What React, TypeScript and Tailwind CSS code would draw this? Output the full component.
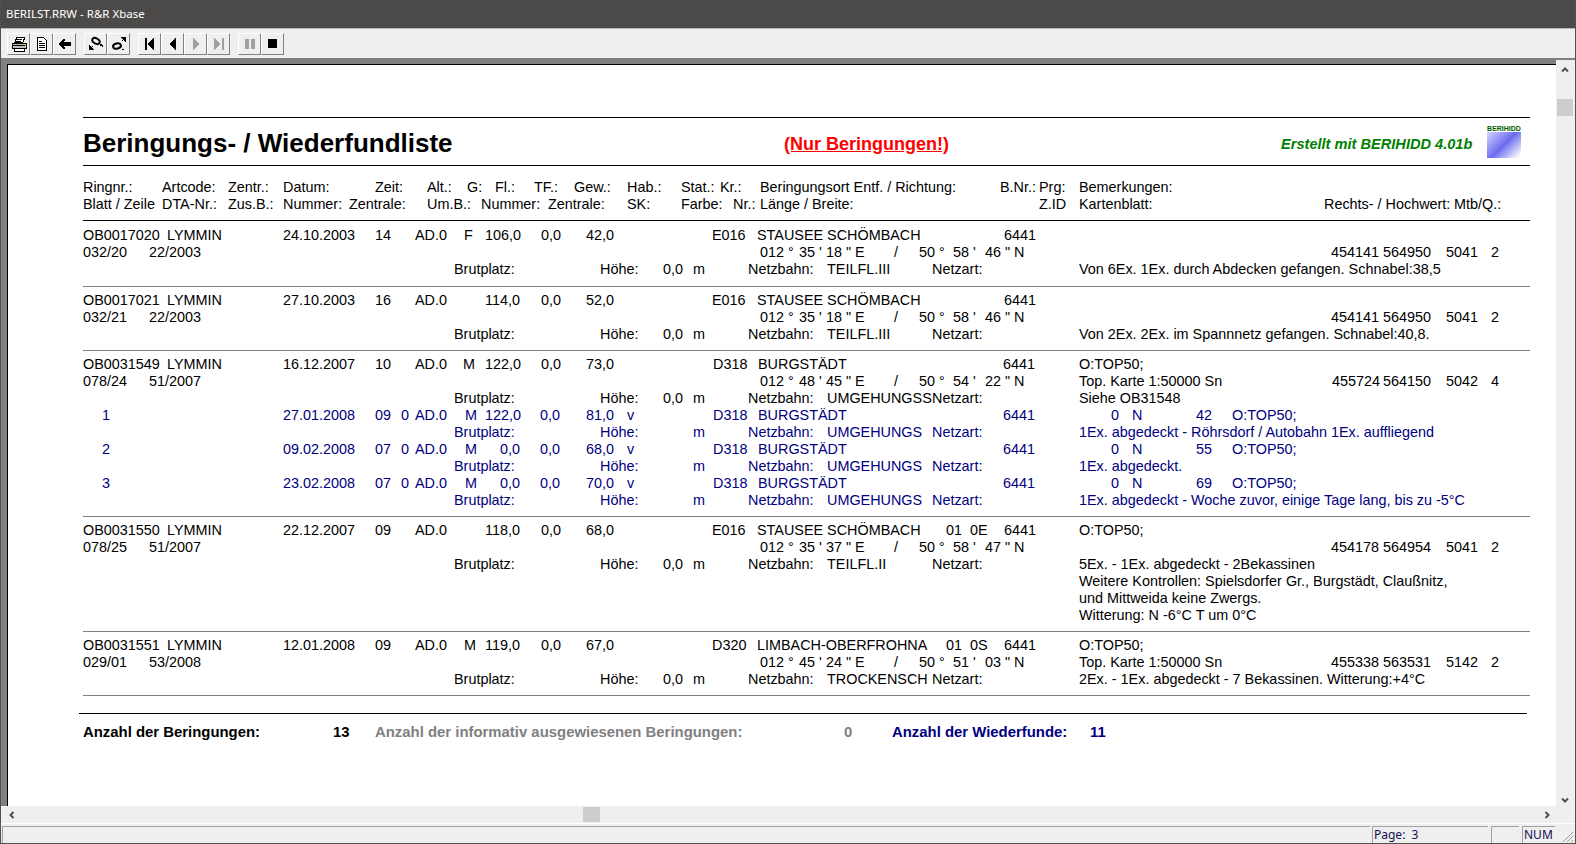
import type { ReactNode } from "react";

type Cell = [number, string];

const PAGE_X = 83;

// column positions are the content of this print preview: each line is a flex
// row whose cells run from one column start to the next
function Line({ cells }: { cells: Cell[] }) {
  return (
    <div className="flex h-[17px] items-center whitespace-pre">
      {cells.map(([x, text], i) => {
        const next = cells[i + 1] ? cells[i + 1][0] : null;
        return (
          <span
            key={i}
            className="shrink-0"
            style={{
              marginLeft: i === 0 ? x - PAGE_X : 0,
              width: next === null ? undefined : next - x,
            }}
          >
            {text}
          </span>
        );
      })}
    </div>
  );
}

function coords(a: string, b: string, c: string, d: string, e: string, f: string): Cell[] {
  return [
    [760, `${a} °`],
    [799, `${b} '`],
    [826, `${c} " E`],
    [894, "/"],
    [919, `${d} °`],
    [953, `${e} '`],
    [985, `${f} " N`],
  ];
}

function Row({ lines, className = "pt-[5px] pb-[7px]" }: { lines: ReactNode; className?: string }) {
  return <div className={`border-b border-[#808080] ${className}`}>{lines}</div>;
}

function SubRow({ n, date, time, w1, w2, v, no, c, text }: {
  n: string; date: string; time: string; w1: string; w2: string; v: string; no: string; c: string; text: string;
}) {
  return (
    <div className="text-[#000080]">
      <Line
        cells={[
          [102, n], [283, date], [375, time], [401, "0"], [415, "AD.0"], [465, "M"],
          [w1 === "122,0" ? 485 : 500, w1], [540, w2], [586, v], [627, "v"], [713, "D318"],
          [758, "BURGSTÄDT"], [1003, "6441"], [1111, "0"], [1132, "N"], [1196, no], [1232, c],
        ]}
      />
      <Line
        cells={[
          [454, "Brutplatz:"], [600, "Höhe:"], [693, "m"], [748, "Netzbahn:"],
          [827, "UMGEHUNGS"], [932, "Netzart:"], [1079, text],
        ]}
      />
    </div>
  );
}

function ToolButton({ children }: { children: ReactNode }) {
  return (
    <div className="flex h-[22px] w-[23px] items-center justify-center border border-t-white border-l-white border-r-[#808080] border-b-[#808080] bg-[#efefef]">
      {children}
    </div>
  );
}

function Icon({ children }: { children: ReactNode }) {
  return (
    <svg width="16" height="16" viewBox="0 0 16 16" shapeRendering="crispEdges">
      {children}
    </svg>
  );
}

export default function App() {
  return (
    <div className="flex h-[844px] w-[1576px] flex-col overflow-hidden border-x border-b border-[#505050] bg-[#efefef] font-['Liberation_Sans',Arial,sans-serif] text-black">
      {/* title bar */}
      <div className="flex h-[28px] shrink-0 items-center bg-[#4c4a48] pl-[5px] font-['Noto_Sans',sans-serif] text-[11.5px] text-white">
        BERILST.RRW - R&amp;R Xbase
      </div>

      {/* toolbar */}
      <div className="flex h-[30px] shrink-0 items-center border-t border-[#b8b8b8] bg-[#efefef] pl-[6px] pt-[1px]">
        <div className="flex">
          <ToolButton>
            <Icon>
              <path d="M6 1h8l-2 5H4z" fill="#fff" stroke="#000" />
              <path d="M6 3h5M5 5h5" stroke="#000" />
              <path d="M1 7h14v5H1z" fill="#c0c0c0" stroke="#000" />
              <path d="M2 9h12v1H2z" fill="#000" />
              <path d="M3 12h10v3H3z" fill="#fff" stroke="#000" />
              <path d="M11 8h2v1h-2z" fill="#e0c000" />
            </Icon>
          </ToolButton>
          <ToolButton>
            <Icon>
              <path d="M3.5 1.5h6l3 3v10h-9z" fill="#fff" stroke="#000" />
              <path d="M5 5h3v1H5zM5 7h6v1H5zM5 9h6v1H5zM5 11h6v1H5z" fill="#000" />
            </Icon>
          </ToolButton>
          <ToolButton>
            <Icon>
              <path d="M7 3h2v2H8v1h7v4H8v1h1v2H7v-1H6v-1H5v-1H4V9H3V7h1V6h1V5h1V4h1z" fill="#000" transform="translate(-1 0)" />
            </Icon>
          </ToolButton>
        </div>
        <div className="ml-[8px] flex">
          <ToolButton>
            <Icon>
              <ellipse cx="8" cy="5" rx="4" ry="2.6" fill="#efefef" stroke="#000" strokeWidth="2" transform="rotate(30 8 5)" shapeRendering="auto" />
              <path d="M12 8h2v1h1v2h-1v-1h-2z" fill="#000" />
              <path d="M1 9h1v1h1v1h1v-1h1v1H4v1h1v1h1v1H1z" fill="#000" />
            </Icon>
          </ToolButton>
          <ToolButton>
            <Icon>
              <ellipse cx="6" cy="10" rx="4" ry="2.6" fill="#efefef" stroke="#000" strokeWidth="2" transform="rotate(-15 6 10)" shapeRendering="auto" />
              <path d="M10 1h5v5h-1V5h-1V4h-1v1h-1V4h1V3h-1V2h-1z" fill="#000" />
              <path d="M11 13h2v1h-2z" fill="#000" />
            </Icon>
          </ToolButton>
        </div>
        <div className="ml-[8px] flex">
          <ToolButton>
            <Icon>
              <path d="M3 2h2v12H3zM12 2v12h-1v-1h-1v-1H9v-1H8v-1H7V9H6V7h1V6h1V5h1V4h1V3h1V2z" fill="#000" />
            </Icon>
          </ToolButton>
          <ToolButton>
            <Icon>
              <path d="M11 2v12h-1v-1H9v-1H8v-1H7v-1H6V9H5V7h1V6h1V5h1V4h1V3h1V2z" fill="#000" />
            </Icon>
          </ToolButton>
          <ToolButton>
            <Icon>
              <path d="M5 2v12h1v-1h1v-1h1v-1h1v-1h1V9h1V7h-1V6H9V5H8V4H7V3H6V2z" fill="#a0a0a0" />
            </Icon>
          </ToolButton>
          <ToolButton>
            <Icon>
              <path d="M11 2h2v12h-2zM3 2v12h1v-1h1v-1h1v-1h1v-1h1V9h1V7H8V6H7V5H6V4H5V3H4V2z" fill="#a0a0a0" />
            </Icon>
          </ToolButton>
        </div>
        <div className="ml-[8px] flex">
          <ToolButton>
            <Icon>
              <path d="M3 3h4v10H3zM9 3h4v10H9z" fill="#a0a0a0" />
            </Icon>
          </ToolButton>
          <ToolButton>
            <Icon>
              <path d="M3 3h9v9H3z" fill="#000" />
            </Icon>
          </ToolButton>
        </div>
      </div>

      {/* client area */}
      <div className="flex min-h-0 flex-1 flex-col border-t-2 border-[#808080]">
        <div className="flex min-h-0 flex-1">
          <div className="flex min-w-0 flex-1 flex-col">
            <div className="flex min-h-0 flex-1 border-l-[6px] border-t-[4px] border-[#808080]">
              <div className="min-w-0 flex-1 overflow-hidden border-l border-t border-black bg-white pl-[75px] text-[14.4px] leading-[17px]">
                <div className="w-[1447px] pt-[52px]">
                  {/* report heading */}
                  <div className="flex h-[49px] items-center border-y border-black">
                    <div className="mt-[2px] w-[701px] shrink-0 text-[26px] font-bold leading-none">
                      Beringungs- / Wiederfundliste
                    </div>
                    <div className="mt-[6px] w-[497px] shrink-0 text-[18px] font-bold text-[#ff0000] underline">
                      (Nur Beringungen!)
                    </div>
                    <div className="mt-[6px] w-[206px] shrink-0 text-[14.6px] font-bold italic text-[#008000]">
                      Erstellt mit BERIHIDD 4.01b
                    </div>
                    <div className="flex h-[33px] w-[34px] shrink-0 flex-col">
                      <div className="h-[7px] text-center text-[7px] font-bold leading-[7px] text-[#006000]">BERIHIDD</div>
                      <div className="flex-1 bg-[linear-gradient(135deg,#d4d4ff_0%,#6c6cf0_50%,#ffffff_95%)]" />
                    </div>
                  </div>

                  {/* column headers */}
                  <div className="border-b border-black pt-[13px] pb-[7px]">
                    <Line
                      cells={[
                        [83, "Ringnr.:"], [162, "Artcode:"], [228, "Zentr.:"], [283, "Datum:"], [375, "Zeit:"],
                        [427, "Alt.:"], [467, "G:"], [495, "Fl.:"], [534, "TF.:"], [574, "Gew.:"], [627, "Hab.:"],
                        [681, "Stat.:"], [720, "Kr.:"], [760, "Beringungsort Entf. / Richtung:"], [1000, "B.Nr.:"],
                        [1039, "Prg:"], [1079, "Bemerkungen:"],
                      ]}
                    />
                    <Line
                      cells={[
                        [83, "Blatt / Zeile"], [162, "DTA-Nr.:"], [228, "Zus.B.:"], [283, "Nummer:"], [349, "Zentrale:"],
                        [427, "Um.B.:"], [481, "Nummer:"], [548, "Zentrale:"], [627, "SK:"], [681, "Farbe:"],
                        [733, "Nr.:"], [760, "Länge / Breite:"], [1039, "Z.ID"], [1079, "Kartenblatt:"],
                        [1324, "Rechts- / Hochwert:"], [1454, "Mtb/Q.:"],
                      ]}
                    />
                  </div>

                  {/* entries */}
                  <Row
                    className="pt-[6px] pb-[8px]"
                    lines={
                      <>
                        <Line cells={[[83, "OB0017020"], [167, "LYMMIN"], [283, "24.10.2003"], [375, "14"], [415, "AD.0"], [464, "F"], [485, "106,0"], [541, "0,0"], [586, "42,0"], [712, "E016"], [757, "STAUSEE SCHÖMBACH"], [1004, "6441"]]} />
                        <Line cells={[[83, "032/20"], [149, "22/2003"], ...coords("012", "35", "18", "50", "58", "46"), [1331, "454141"], [1383, "564950"], [1446, "5041"], [1491, "2"]]} />
                        <Line cells={[[454, "Brutplatz:"], [600, "Höhe:"], [663, "0,0"], [693, "m"], [748, "Netzbahn:"], [827, "TEILFL.III"], [932, "Netzart:"], [1079, "Von 6Ex. 1Ex. durch Abdecken gefangen. Schnabel:38,5"]]} />
                      </>
                    }
                  />
                  <Row
                    lines={
                      <>
                        <Line cells={[[83, "OB0017021"], [167, "LYMMIN"], [283, "27.10.2003"], [375, "16"], [415, "AD.0"], [485, "114,0"], [541, "0,0"], [586, "52,0"], [712, "E016"], [757, "STAUSEE SCHÖMBACH"], [1004, "6441"]]} />
                        <Line cells={[[83, "032/21"], [149, "22/2003"], ...coords("012", "35", "18", "50", "58", "46"), [1331, "454141"], [1383, "564950"], [1446, "5041"], [1491, "2"]]} />
                        <Line cells={[[454, "Brutplatz:"], [600, "Höhe:"], [663, "0,0"], [693, "m"], [748, "Netzbahn:"], [827, "TEILFL.III"], [932, "Netzart:"], [1079, "Von 2Ex. 2Ex. im Spannnetz gefangen. Schnabel:40,8."]]} />
                      </>
                    }
                  />
                  <Row
                    lines={
                      <>
                        <Line cells={[[83, "OB0031549"], [167, "LYMMIN"], [283, "16.12.2007"], [375, "10"], [415, "AD.0"], [463, "M"], [485, "122,0"], [541, "0,0"], [586, "73,0"], [713, "D318"], [758, "BURGSTÄDT"], [1003, "6441"], [1079, "O:TOP50;"]]} />
                        <Line cells={[[83, "078/24"], [149, "51/2007"], ...coords("012", "48", "45", "50", "54", "22"), [1079, "Top. Karte 1:50000 Sn"], [1332, "455724"], [1383, "564150"], [1446, "5042"], [1491, "4"]]} />
                        <Line cells={[[454, "Brutplatz:"], [600, "Höhe:"], [663, "0,0"], [693, "m"], [748, "Netzbahn:"], [827, "UMGEHUNGSS"], [932, "Netzart:"], [1079, "Siehe OB31548"]]} />
                        <SubRow n="1" date="27.01.2008" time="09" w1="122,0" w2="0,0" v="81,0" no="42" c="O:TOP50;" text="1Ex. abgedeckt - Röhrsdorf / Autobahn 1Ex. auffliegend" />
                        <SubRow n="2" date="09.02.2008" time="07" w1="0,0" w2="0,0" v="68,0" no="55" c="O:TOP50;" text="1Ex. abgedeckt." />
                        <SubRow n="3" date="23.02.2008" time="07" w1="0,0" w2="0,0" v="70,0" no="69" c="O:TOP50;" text="1Ex. abgedeckt - Woche zuvor, einige Tage lang, bis zu -5°C" />
                      </>
                    }
                  />
                  <Row
                    lines={
                      <>
                        <Line cells={[[83, "OB0031550"], [167, "LYMMIN"], [283, "22.12.2007"], [375, "09"], [415, "AD.0"], [485, "118,0"], [541, "0,0"], [586, "68,0"], [712, "E016"], [757, "STAUSEE SCHÖMBACH"], [946, "01"], [970, "0E"], [1004, "6441"], [1079, "O:TOP50;"]]} />
                        <Line cells={[[83, "078/25"], [149, "51/2007"], ...coords("012", "35", "37", "50", "58", "47"), [1331, "454178"], [1383, "564954"], [1446, "5041"], [1491, "2"]]} />
                        <Line cells={[[454, "Brutplatz:"], [600, "Höhe:"], [663, "0,0"], [693, "m"], [748, "Netzbahn:"], [827, "TEILFL.II"], [932, "Netzart:"], [1079, "5Ex. - 1Ex. abgedeckt - 2Bekassinen"]]} />
                        <Line cells={[[1079, "Weitere Kontrollen: Spielsdorfer Gr., Burgstädt, Claußnitz,"]]} />
                        <Line cells={[[1079, "und Mittweida keine Zwergs."]]} />
                        <Line cells={[[1079, "Witterung: N -6°C T um 0°C"]]} />
                      </>
                    }
                  />
                  <Row
                    lines={
                      <>
                        <Line cells={[[83, "OB0031551"], [167, "LYMMIN"], [283, "12.01.2008"], [375, "09"], [415, "AD.0"], [464, "M"], [485, "119,0"], [541, "0,0"], [586, "67,0"], [712, "D320"], [757, "LIMBACH-OBERFROHNA"], [946, "01"], [970, "0S"], [1004, "6441"], [1079, "O:TOP50;"]]} />
                        <Line cells={[[83, "029/01"], [149, "53/2008"], ...coords("012", "45", "24", "50", "51", "03"), [1079, "Top. Karte 1:50000 Sn"], [1331, "455338"], [1383, "563531"], [1446, "5142"], [1491, "2"]]} />
                        <Line cells={[[454, "Brutplatz:"], [600, "Höhe:"], [663, "0,0"], [693, "m"], [748, "Netzbahn:"], [827, "TROCKENSCH"], [932, "Netzart:"], [1079, "2Ex. - 1Ex. abgedeckt - 7 Bekassinen. Witterung:+4°C"]]} />
                      </>
                    }
                  />

                  {/* totals */}
                  <div className="mt-[17px] -ml-[4px] flex h-[38px] w-[1448px] items-center border-t border-black pl-[4px] text-[14.9px] font-bold">
                    <span className="w-[250px] shrink-0">Anzahl der Beringungen:</span>
                    <span className="w-[42px] shrink-0">13</span>
                    <span className="w-[469px] shrink-0 text-[#808080]">Anzahl der informativ ausgewiesenen Beringungen:</span>
                    <span className="w-[48px] shrink-0 text-[#808080]">0</span>
                    <span className="w-[198px] shrink-0 text-[#000080]">Anzahl der Wiederfunde:</span>
                    <span className="text-[#000080]">11</span>
                  </div>
                </div>
              </div>
            </div>
            {/* horizontal scrollbar */}
            <div className="flex h-[17px] shrink-0 items-center bg-[#efefef] pl-[7px]">
              <svg width="8" height="8" viewBox="0 0 8 8"><path d="M5.5 1L2.5 4l3 3" fill="none" stroke="#505050" strokeWidth="2" /></svg>
              <div className="ml-[567px] h-[15px] w-[17px] bg-[#cdcdcd]" />
              <div className="flex-1" />
              <svg className="mr-[5px]" width="8" height="8" viewBox="0 0 8 8"><path d="M2.5 1l3 3-3 3" fill="none" stroke="#505050" strokeWidth="2" /></svg>
            </div>
          </div>

          {/* vertical scrollbar */}
          <div className="flex w-[17px] shrink-0 flex-col items-center bg-[#efefef] pt-[6px] pb-[19px]">
            <svg width="8" height="8" viewBox="0 0 8 8"><path d="M1 5.5l3-3 3 3" fill="none" stroke="#505050" strokeWidth="2" /></svg>
            <div className="mt-[25px] h-[17px] w-[16px] bg-[#cdcdcd]" />
            <div className="flex-1" />
            <svg width="8" height="8" viewBox="0 0 8 8"><path d="M1 2.5l3 3 3-3" fill="none" stroke="#505050" strokeWidth="2" /></svg>
          </div>
          <div className="w-[2px] shrink-0" />
        </div>

        {/* status bar */}
        <div className="flex h-[20px] shrink-0 border-t border-white bg-[#efefef] pl-[1px] pt-[2px] font-['Noto_Sans',sans-serif] text-[12px] leading-[15px]">
          <div className="w-[1368px] border-l border-t border-[#a0a0a0]" />
          <div className="ml-[2px] w-[116px] border-l border-t border-[#a0a0a0] pl-[1px] text-[#101050]">Page:&nbsp; 3</div>
          <div className="ml-[3px] w-[28px] border-l border-t border-[#a0a0a0]" />
          <div className="ml-[3px] w-[33px] border-l border-t border-[#a0a0a0] pl-[1px] text-[#101050]">NUM</div>
          <svg className="ml-[5px] mt-[3px]" width="14" height="14" viewBox="0 0 14 14">
            <path d="M13 3L3 13M13 7l-6 6M13 11l-2 2" stroke="#a0a0a0" strokeWidth="1" fill="none" />
          </svg>
        </div>
      </div>
    </div>
  );
}
